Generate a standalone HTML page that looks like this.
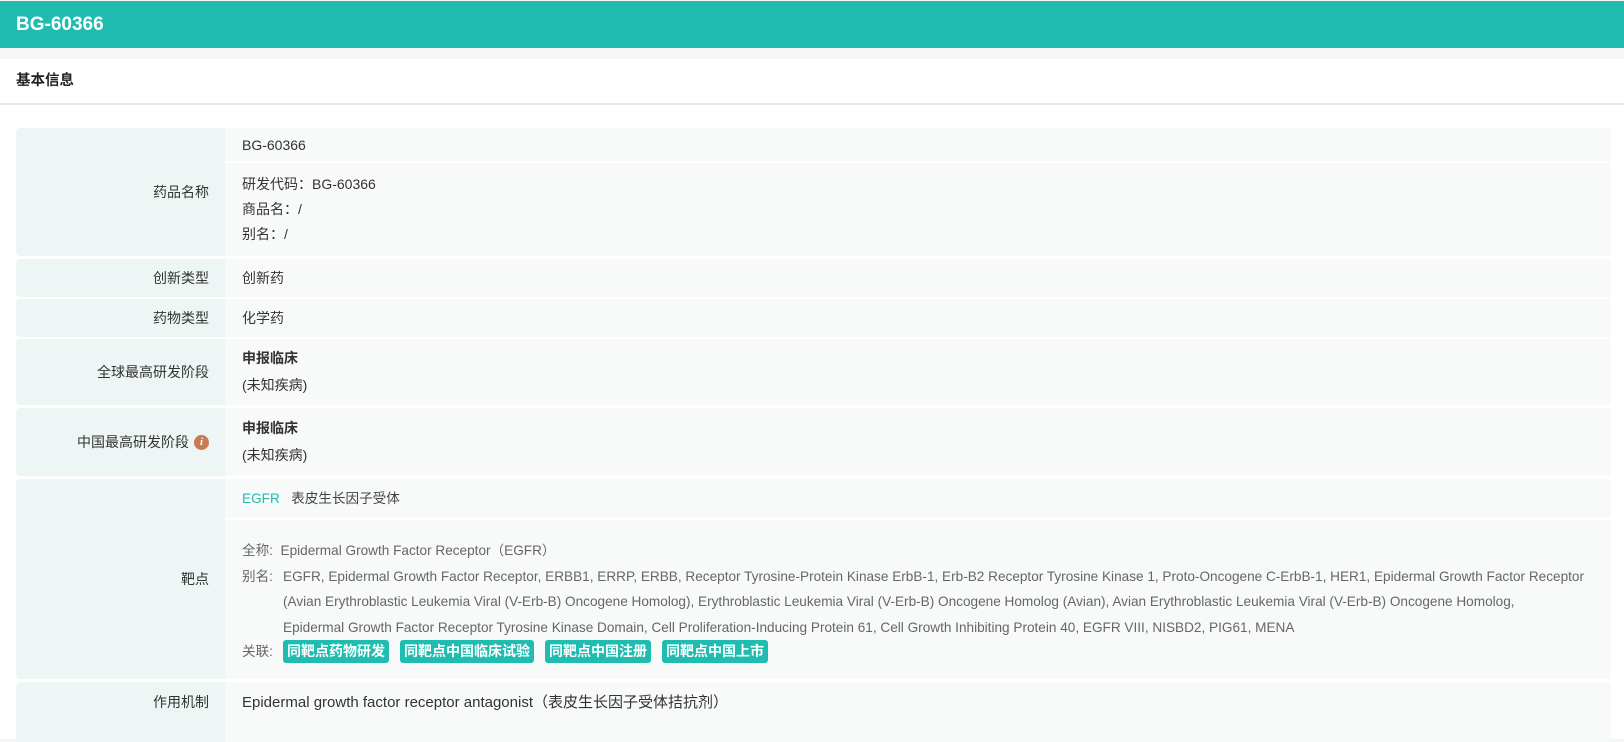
<!DOCTYPE html>
<html><head><meta charset="utf-8"><style>
*{margin:0;padding:0;box-sizing:border-box}
body{width:1624px;height:719px;overflow:hidden;background:#f5f6f8;font-family:"Liberation Sans","Noto Sans CJK SC",sans-serif;font-size:14px;color:#333}
.hd{position:absolute;left:0;top:1px;width:1624px;height:47px;background:#20bcb0;color:#fff;font-weight:bold;font-size:19px;line-height:47px;padding-left:16px}
.card{position:absolute;left:0;top:59px;width:1624px;height:680px;background:#fff}
.tt{height:46px;border-bottom:2px solid #e8e8e8;font-weight:bold;font-size:14.5px;line-height:44px;padding-left:16px;color:#222}
.row{position:absolute;left:16px;width:1595px;display:flex}
.lb{width:209px;background:#eef6f5;text-align:right;padding-right:16px;display:flex;align-items:center;justify-content:flex-end;border-radius:4px 0 0 4px;color:#333}
.vl{flex:1;background:#f8fafa;padding-left:17px;display:flex;flex-direction:column;justify-content:center}
.sub{background:#f8fafa;padding-left:17px;display:flex;flex-direction:column;justify-content:center}
.vl2{flex:1;display:flex;flex-direction:column;gap:2px;background:#fff}
.gr{color:#666;font-size:13.6px}
.tag{display:inline-block;background:#20bcb0;color:#fff;font-weight:bold;font-size:14px;height:23px;line-height:23px;padding:0 4px;border-radius:3px;margin-right:11px}
.info{display:inline-block;width:15px;height:15px;border-radius:50%;background:#c97a55;color:#fff;font-size:11px;font-style:italic;font-family:"Liberation Serif",serif;line-height:15px;text-align:center;margin-left:5px;font-weight:bold}
</style></head><body>
<div class="hd">BG-60366</div>
<div class="card"><div class="tt">基本信息</div></div>

<div class="row" style="top:128px;height:128px">
<div class="lb">药品名称</div>
<div class="vl2">
<div class="sub" style="height:33px">BG-60366</div>
<div class="sub" style="flex:1;line-height:25px">研发代码：BG-60366<br>商品名：/<br>别名：/</div>
</div></div>

<div class="row" style="top:259px;height:38px"><div class="lb">创新类型</div><div class="vl">创新药</div></div>
<div class="row" style="top:299px;height:38px"><div class="lb">药物类型</div><div class="vl">化学药</div></div>
<div class="row" style="top:339px;height:66px"><div class="lb">全球最高研发阶段</div><div class="vl" style="line-height:27px"><b>申报临床</b><span>(未知疾病)</span></div></div>
<div class="row" style="top:408px;height:68px"><div class="lb">中国最高研发阶段<span class="info">i</span></div><div class="vl" style="line-height:27px"><b>申报临床</b><span>(未知疾病)</span></div></div>

<div class="row" style="top:479px;height:200px">
<div class="lb">靶点</div>
<div class="vl2">
<div class="sub" style="height:39px;display:block;line-height:39px;font-size:13.6px"><span style="color:#20bcb0">EGFR</span>&nbsp;&nbsp; <span style="color:#444">表皮生长因子受体</span></div>
<div class="sub" style="flex:1;display:block;padding-top:18px;line-height:25.5px" >
<div class="gr" style="white-space:nowrap">全称:&nbsp; Epidermal Growth Factor Receptor（EGFR）</div>
<div class="gr" style="display:flex;white-space:nowrap"><span style="width:41px;flex:none">别名:</span><span>EGFR, Epidermal Growth Factor Receptor, ERBB1, ERRP, ERBB, Receptor Tyrosine-Protein Kinase ErbB-1, Erb-B2 Receptor Tyrosine Kinase 1, Proto-Oncogene C-ErbB-1, HER1, Epidermal Growth Factor Receptor<br>(Avian Erythroblastic Leukemia Viral (V-Erb-B) Oncogene Homolog), Erythroblastic Leukemia Viral (V-Erb-B) Oncogene Homolog (Avian), Avian Erythroblastic Leukemia Viral (V-Erb-B) Oncogene Homolog,<br>Epidermal Growth Factor Receptor Tyrosine Kinase Domain, Cell Proliferation-Inducing Protein 61, Cell Growth Inhibiting Protein 40, EGFR VIII, NISBD2, PIG61, MENA</span></div>
<div class="gr" style="display:flex;align-items:center;white-space:nowrap;margin-top:-1px"><span style="width:41px;flex:none">关联:</span><span class="tag">同靶点药物研发</span><span class="tag">同靶点中国临床试验</span><span class="tag">同靶点中国注册</span><span class="tag">同靶点中国上市</span></div>
</div>
</div></div>

<div class="row" style="top:682px;height:60px;align-items:stretch"><div class="lb" style="align-items:flex-start;padding-top:10px">作用机制</div><div class="vl" style="justify-content:flex-start;padding-top:9px;font-size:15px">Epidermal growth factor receptor antagonist（表皮生长因子受体拮抗剂）</div></div>
</body></html>
